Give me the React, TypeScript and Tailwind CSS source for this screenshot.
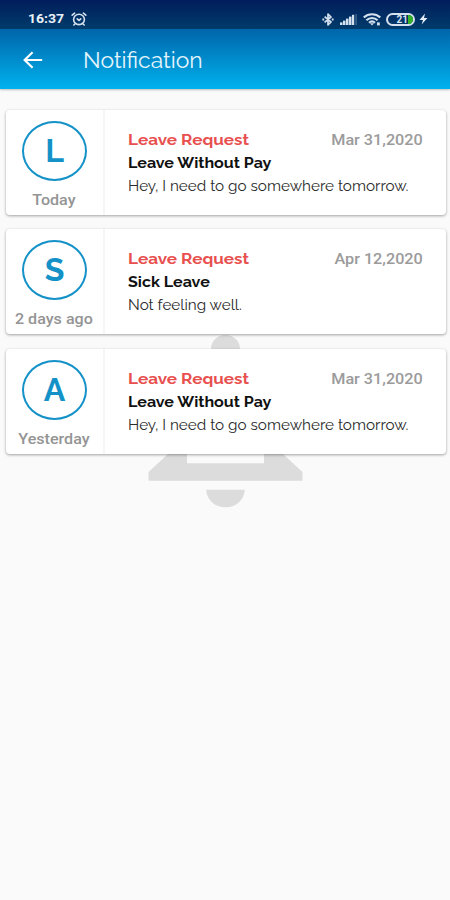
import React from "react";

const RALEWAY = "font-[Raleway,Lato,'Open_Sans',sans-serif]";
const ROBOTO = "font-[Roboto,'Noto_Sans',sans-serif]";

type Notice = {
  initial: string;
  when: string;
  subject: string;
  message: string;
  date: string;
};

const notices: Notice[] = [
  { initial: "L", when: "Today", subject: "Leave Without Pay", message: "Hey, I need to go somewhere tomorrow.", date: "Mar 31,2020" },
  { initial: "S", when: "2 days ago", subject: "Sick Leave", message: "Not feeling well.", date: "Apr 12,2020" },
  { initial: "A", when: "Yesterday", subject: "Leave Without Pay", message: "Hey, I need to go somewhere tomorrow.", date: "Mar 31,2020" },
];

function AlarmIcon() {
  return (
    <svg className="h-[14px] w-4" viewBox="0 0 16 14" fill="none" stroke="#d5e1ef" strokeWidth="1.6" strokeLinecap="round">
      <ellipse cx="8" cy="7.4" rx="5.4" ry="5.2" />
      <path d="M1.2 3.2 3.6 1.2M14.8 3.2 12.4 1.2M3.8 12.2 2.8 13M12.2 12.2l1 .8" />
      <path d="M6.2 6.8 8 8.4l1.8-1.6" />
    </svg>
  );
}

function BluetoothIcon() {
  return (
    <svg className="h-[13px] w-3" viewBox="0 0 12 13" fill="none" stroke="#d5e1ef" strokeWidth="1.7" strokeLinejoin="round">
      <path d="M2.6 3.6 9 9 6 11.9V1.1L9 4 2.6 9.4" />
      <path d="M.4 6.5h1.8M9.8 6.5h1.8" strokeWidth="2" />
    </svg>
  );
}

function SignalIcon() {
  return (
    <svg className="h-[11px] w-[17px]" viewBox="0 0 17 11" fill="#d5e1ef">
      <rect x="0" y="8.4" width="2.5" height="2.6" />
      <rect x="3" y="6.6" width="2.5" height="4.4" />
      <rect x="6" y="4.6" width="2.5" height="6.4" />
      <rect x="9" y="2.6" width="2.5" height="8.4" />
      <rect x="12" y="0.8" width="2.2" height="10.2" />
      <rect x="15.4" y="0" width="1.4" height="11" opacity=".3" />
    </svg>
  );
}

function WifiIcon() {
  return (
    <svg className="h-[13px] w-[18px]" viewBox="0 0 18 13" fill="none" stroke="#d5e1ef" strokeWidth="2.1">
      <path d="M.8 4.4C5.4.2 12.6.2 17.2 4.4" />
      <path d="M3.4 7.2c3.2-3 8-3 11.2 0" />
      <path d="M6 9.8c1.8-1.6 4.2-1.6 6 0" />
      <path d="M7 10.2h4L9 12.6z" fill="#d5e1ef" stroke="none" />
      <rect x="14" y="9.4" width="2.8" height="3" fill="#d5e1ef" stroke="none" />
    </svg>
  );
}

function StatusBar() {
  return (
    <div className="flex h-[29px] items-center bg-linear-to-b from-[#021c5b] to-[#003c6b] pt-[9px] pl-7">
      <span className={`${ROBOTO} w-[43px] text-[13px] leading-5 font-bold text-[#e9f1fa]`}>
        <span className="inline-block origin-left scale-x-[1.08]">16:37</span>
      </span>
      <AlarmIcon />
      <div className="ml-[235px] flex items-center">
        <BluetoothIcon />
        <div className="ml-[6px]"><SignalIcon /></div>
        <div className="ml-[6px]"><WifiIcon /></div>
        <div className="ml-[5px] flex h-[13px] w-[29px] items-center justify-end overflow-hidden rounded-full border-2 border-[#d5e1ef]">
          <span className={`${ROBOTO} pt-px text-[10px] leading-none font-bold text-[#d5e1ef]`}>21</span>
          <span className="h-full w-[5px] bg-[#35b526]" />
        </div>
        <svg className="ml-1 h-[12px] w-[9px]" viewBox="0 0 9 12" fill="#e6eef8">
          <path d="M6 .5.5 7H4L2.6 11.6 8.5 5H5z" />
        </svg>
      </div>
    </div>
  );
}

function AppBar() {
  return (
    <header className="flex h-[60px] items-center bg-linear-to-b from-[#0066aa] to-[#00b2ee] pt-px pl-[23px]">
      <svg className="h-[18px] w-[20px]" viewBox="0 0 20 18" fill="none" stroke="#fff" strokeWidth="2.1">
        <path d="M19.2 9H1.6M9.6 1.2 1.6 9l8 7.8" />
      </svg>
      <h1 className={`${RALEWAY} ml-[40px] text-[22px] leading-none font-normal text-[#e4f4fc]`}>
        <span className="inline-block origin-left scale-x-[1.04]">Notification</span>
      </h1>
    </header>
  );
}

function NoticeCard({ notice }: { notice: Notice }) {
  return (
    <article className="flex h-[105px] rounded-[4px] bg-white shadow-[0_1px_3px_rgba(0,0,0,0.36)]">
      <div className="flex w-[99px] shrink-0 flex-col items-center border-r-2 border-[#f5f5f5] pt-[11px]">
        <div className="flex h-[60px] w-[65px] items-center justify-center rounded-[50%] border-2 border-[#1492c8]">
          <span className={`${RALEWAY} text-[32px] leading-none font-bold text-[#1492c8]`}>{notice.initial}</span>
        </div>
        <span className={`${ROBOTO} mt-[9px] mr-[2px] scale-x-[1.15] text-[14px] leading-5 font-medium whitespace-nowrap text-[#949494]`}>{notice.when}</span>
      </div>
      <div className={`${RALEWAY} flex grow flex-col pt-[19px] pr-[23px] pl-[23px] text-[15px] whitespace-nowrap`}>
        <div className="flex justify-between leading-[23px]">
          <h2 className="origin-left scale-x-[1.14] text-[15px] font-bold text-[#e8504f]">Leave Request</h2>
          <time className={`${ROBOTO} origin-right scale-x-[1.08] text-[15px] font-medium text-[#9b9b9b]`}>{notice.date}</time>
        </div>
        <h3 className="origin-left scale-x-[1.07] leading-[23px] font-bold text-[#111]">{notice.subject}</h3>
        <p className="origin-left scale-x-[1.017] leading-[23px] text-[#2a2a2a]">{notice.message}</p>
      </div>
    </article>
  );
}

function BellBackdrop() {
  return (
    <svg className="absolute top-[313px] left-[110px] h-[212px] w-[231px]" viewBox="0 0 24 24" preserveAspectRatio="none" fill="#dcdcdc">
      <path d="M12 22c1.1 0 2-.9 2-2h-4c0 1.1.9 2 2 2zm6-6v-5c0-3.07-1.63-5.64-4.5-6.32V4c0-.83-.67-1.5-1.5-1.5s-1.5.67-1.5 1.5v.68C7.64 5.36 6 7.92 6 11v5l-2 2v1h16v-1l-2-2zm-2 1H8v-6c0-2.48 1.51-4.5 4-4.5s4 2.02 4 4.5v6z" />
    </svg>
  );
}

export default function App() {
  return (
    <div className="relative h-[900px] w-[450px] overflow-hidden bg-[#fafafa]">
      <BellBackdrop />
      <div className="relative shadow-[0_1px_2px_rgba(0,0,0,0.25)]">
        <StatusBar />
        <AppBar />
      </div>
      <main className="relative flex flex-col gap-[14.5px] pt-[20.6px] pr-[4px] pl-[6px]">
        {notices.map((n) => (
          <NoticeCard key={n.initial} notice={n} />
        ))}
      </main>
    </div>
  );
}
